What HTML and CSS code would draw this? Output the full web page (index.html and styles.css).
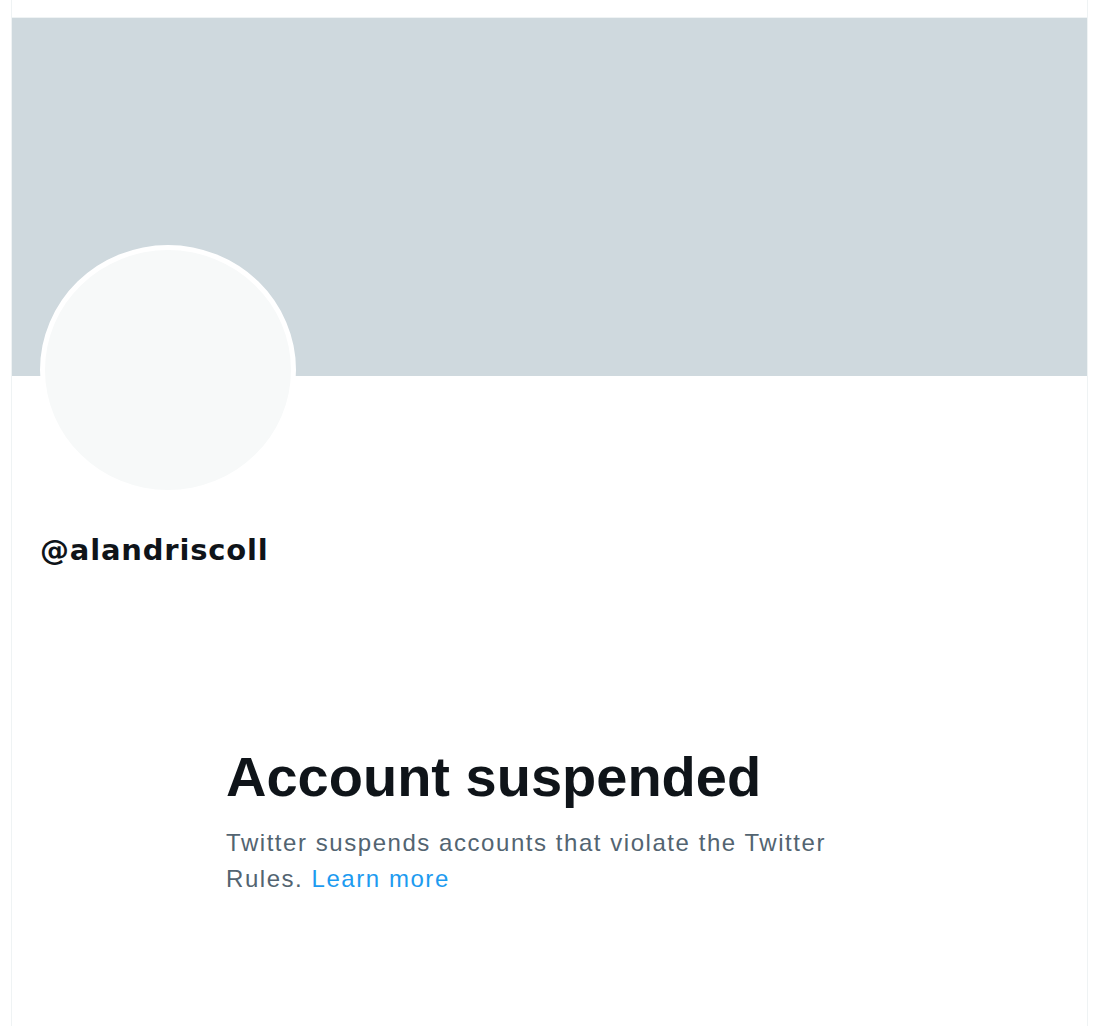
FILE: index.html
```html
<!DOCTYPE html>
<html lang="en">
<head>
  <meta charset="UTF-8" />
  <meta name="viewport" content="width=device-width, initial-scale=1.0"/>
  <title>Account suspended</title>
  <link rel="stylesheet" href="styles.css">
</head>
<body>

  <div class="coluna">
    <div class="topo"></div>
    <div class="banner"></div>

    <div class="perfil">
      <div class="avatar"></div>
      <div class="usuario">@alandriscoll</div>
    </div>

    <div class="aviso">
      <h1>Account suspended</h1>
      <p>Twitter suspends accounts that violate the Twitter Rules. <a href="#">Learn more</a></p>
    </div>
  </div>

</body>
</html>
```

FILE: styles.css
```css
body {
  margin: 0;
  background: #ffffff;
  font-family: "Liberation Sans", Arial, sans-serif;
  color: #0f1419;
}
.coluna {
  margin-left: 11px;
  width: 1075px;
  min-height: 1026px;
  border-left: 1px solid #eff3f4;
  border-right: 1px solid #eff3f4;
}
.topo {
  height: 17px;
  border-bottom: 1px solid #eff3f4;
}
.banner {
  height: 358px;
  background: #cfd9de;
}
.perfil {
  padding-left: 28px;
}
.avatar {
  width: 246px;
  height: 240px;
  margin-top: -131px;
  border: 5px solid #ffffff;
  border-radius: 50%;
  background: #f7f9f9;
}
.usuario {
  margin-top: 37px;
  font-family: "DejaVu Sans", sans-serif;
  font-weight: bold;
  font-size: 29px;
  line-height: 36px;
  letter-spacing: 0.8px;
}
.aviso {
  margin-left: 214px;
  margin-top: 177px;
  max-width: 620px;
}
h1 {
  margin: 0;
  font-size: 56px;
  line-height: 64px;
  font-weight: 800;
}
p {
  margin: 16px 0 0;
  font-size: 24px;
  line-height: 36px;
  letter-spacing: 1.55px;
  color: #536471;
}
a {
  color: #1d9bf0;
  text-decoration: none;
}
```
